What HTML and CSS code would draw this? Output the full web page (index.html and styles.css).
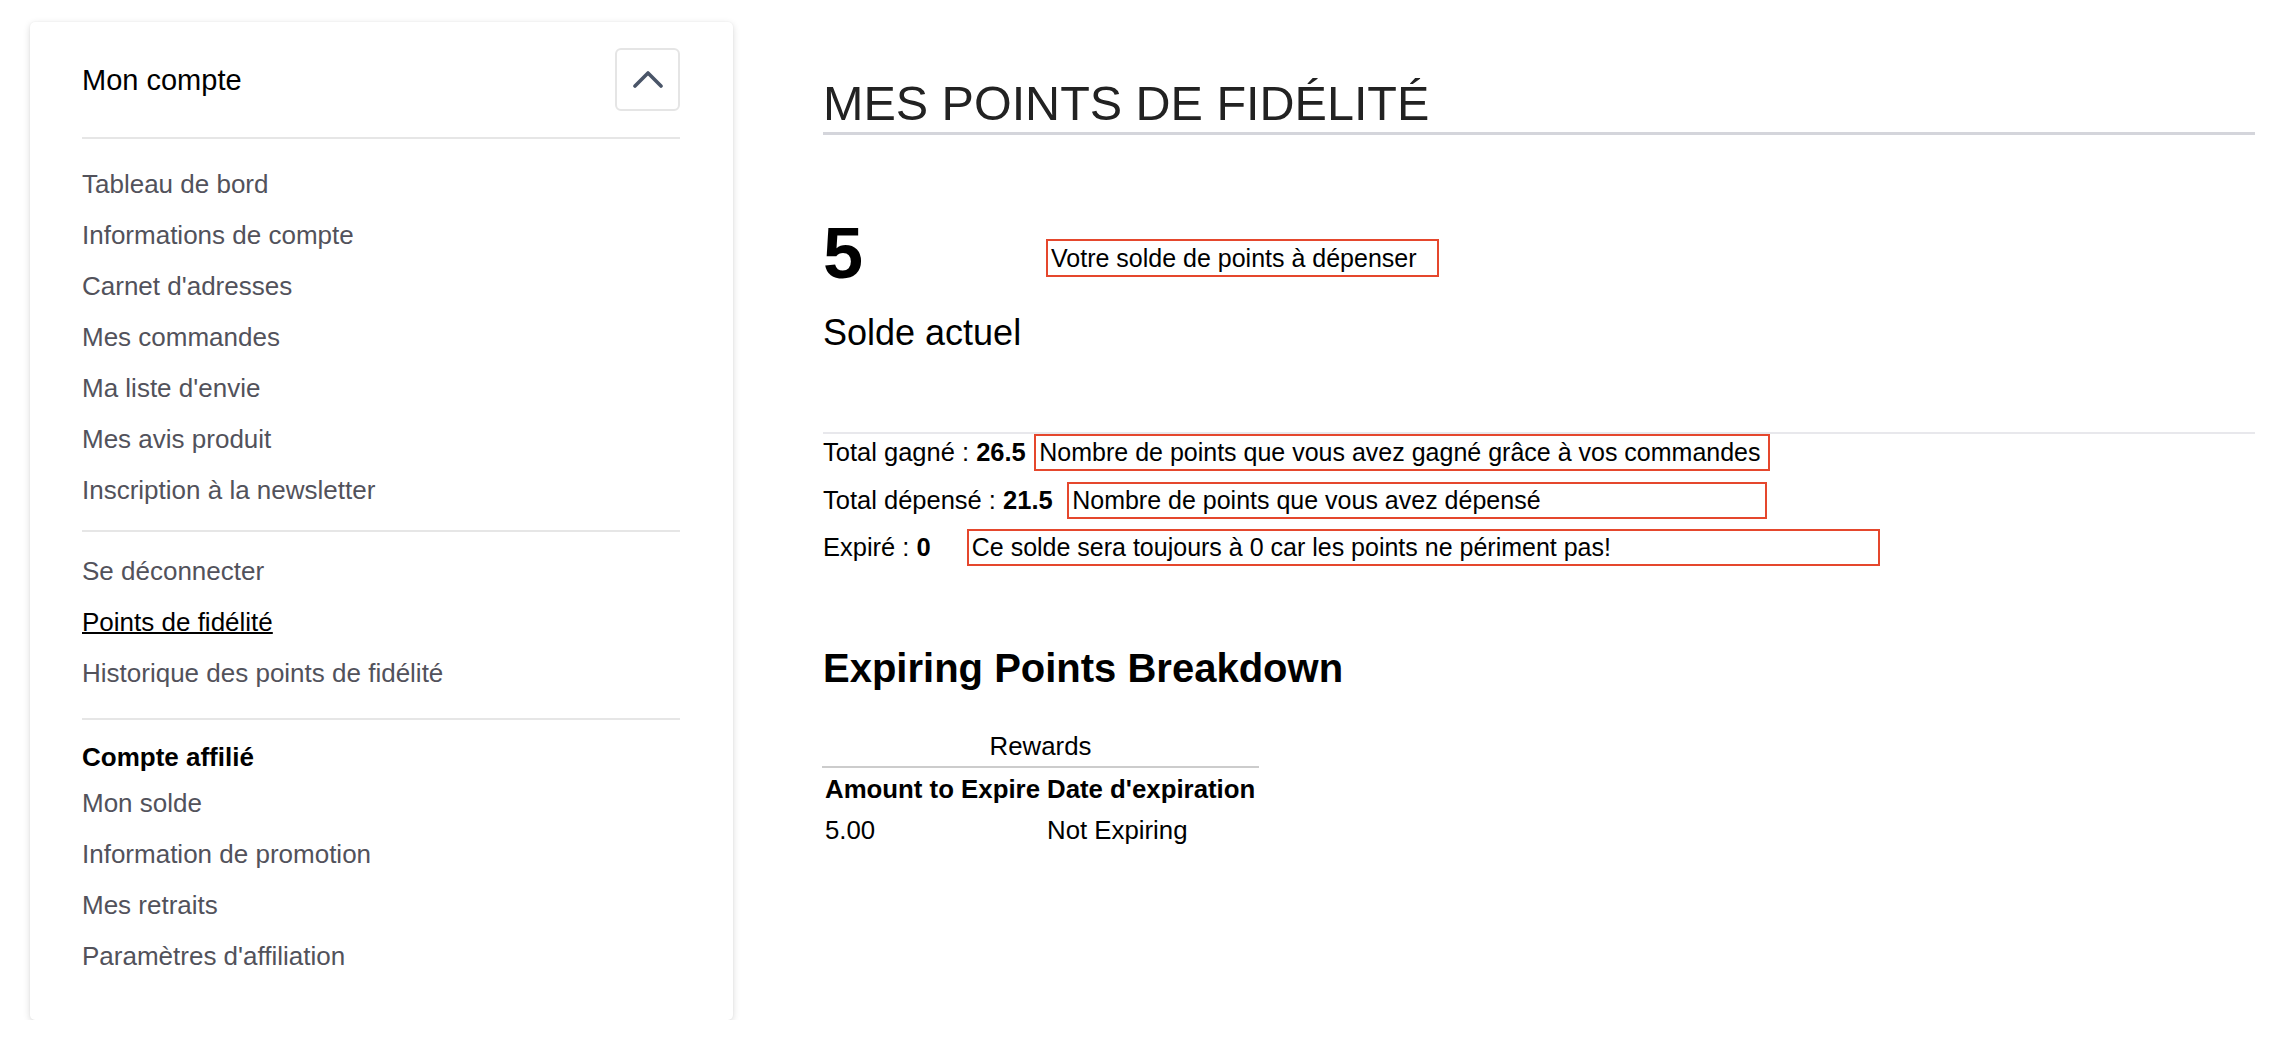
FILE: index.html
```html
<!DOCTYPE html>
<html lang="fr">
<head>
<meta charset="utf-8">
<title>Mes points de fidélité</title>
<link rel="stylesheet" href="styles.css">
</head>
<body>
<div class="page">
  <aside class="sidebar">
    <div class="sidebar-head">
      <span class="sidebar-title">Mon compte</span>
      <button class="toggle" type="button" aria-label="Réduire">
        <svg class="chevron" width="30" height="17" viewBox="0 0 30 17" aria-hidden="true">
          <polyline points="2,15 15,2 28,15" fill="none" stroke="#4a5568" stroke-width="3.6" stroke-linecap="round" stroke-linejoin="round"/>
        </svg>
      </button>
    </div>
    <hr class="divider">
    <ul class="nav nav--main">
      <li><a href="#">Tableau de bord</a></li>
      <li><a href="#">Informations de compte</a></li>
      <li><a href="#">Carnet d'adresses</a></li>
      <li><a href="#">Mes commandes</a></li>
      <li><a href="#">Ma liste d'envie</a></li>
      <li><a href="#">Mes avis produit</a></li>
      <li><a href="#">Inscription à la newsletter</a></li>
    </ul>
    <hr class="divider">
    <ul class="nav nav--account">
      <li><a href="#">Se déconnecter</a></li>
      <li><a href="#" class="active">Points de fidélité</a></li>
      <li><a href="#">Historique des points de fidélité</a></li>
    </ul>
    <hr class="divider">
    <div class="nav-heading">Compte affilié</div>
    <ul class="nav nav--affiliate">
      <li><a href="#">Mon solde</a></li>
      <li><a href="#">Information de promotion</a></li>
      <li><a href="#">Mes retraits</a></li>
      <li><a href="#">Paramètres d'affiliation</a></li>
    </ul>
  </aside>

  <main class="main">
    <h1 class="page-title">MES POINTS DE FIDÉLITÉ</h1>

    <div class="balance">
      <div class="balance-value">5</div>
      <div class="note note--balance">Votre solde de points à dépenser</div>
    </div>
    <div class="balance-label">Solde actuel</div>

    <div class="totals">
      <div class="total-row">
        <span class="total-label">Total gagné : <b>26.5</b></span>
        <span class="note note--earned">Nombre de points que vous avez gagné grâce à vos commandes</span>
      </div>
      <div class="total-row">
        <span class="total-label">Total dépensé : <b>21.5</b></span>
        <span class="note note--spent">Nombre de points que vous avez dépensé</span>
      </div>
      <div class="total-row">
        <span class="total-label">Expiré : <b>0</b></span>
        <span class="note note--expired">Ce solde sera toujours à 0 car les points ne périment pas!</span>
      </div>
    </div>

    <h2 class="section-title">Expiring Points Breakdown</h2>

    <table class="expiry">
      <colgroup>
        <col class="col-amount">
        <col class="col-date">
      </colgroup>
      <thead>
        <tr><th colspan="2" class="expiry-caption">Rewards</th></tr>
        <tr><th>Amount to Expire</th><th>Date d'expiration</th></tr>
      </thead>
      <tbody>
        <tr><td>5.00</td><td>Not Expiring</td></tr>
      </tbody>
    </table>
  </main>
</div>
</body>
</html>
```
FILE: styles.css
```css
* { box-sizing: border-box; }

html, body {
  margin: 0;
  background: #fff;
}

body {
  font-family: "Liberation Sans", Arial, Helvetica, sans-serif;
  color: #000;
}

.page {
  display: flex;
  align-items: flex-start;
  padding: 22px 37px 0 30px;
}

/* ---------- Sidebar ---------- */
.sidebar {
  flex: none;
  width: 703px;
  background: #fff;
  border-radius: 5px;
  box-shadow: 0 2px 7px rgba(0, 0, 0, 0.15), 0 0 2px rgba(0, 0, 0, 0.05);
  padding: 26px 53px 38px 52px;
}

.sidebar-head {
  display: flex;
  align-items: center;
  justify-content: space-between;
  height: 63px;
  margin-bottom: 26px;
}

.sidebar-title {
  font-size: 29px;
  line-height: 40px;
  color: #000;
}

.toggle {
  width: 65px;
  height: 63px;
  padding: 0;
  border: 2px solid #e5e5e5;
  border-radius: 6px;
  background: #fff;
  display: flex;
  align-items: center;
  justify-content: center;
}

.chevron { display: block; }

.divider {
  height: 2px;
  margin: 0;
  border: 0;
  background: #e6e6e6;
}

.nav {
  list-style: none;
  margin: 0;
  padding: 0;
}

.nav--main { padding: 20px 0 14px; }
.nav--account { padding: 14px 0 19px; }

.nav a {
  display: block;
  font-size: 26px;
  line-height: 51px;
  color: #52525b;
  text-decoration: none;
}

.nav a.active {
  color: #000;
  text-decoration: underline;
  text-decoration-thickness: 2px;
}

.nav-heading {
  margin-top: 17px;
  font-size: 26px;
  line-height: 41px;
  font-weight: bold;
  color: #000;
}

/* ---------- Main ---------- */
.main {
  flex: 1;
  min-width: 0;
  margin-left: 90px;
}

.page-title {
  margin: 52px 0 0;
  font-size: 48.5px;
  font-weight: normal;
  line-height: 58px;
  color: #222;
  border-bottom: 3px solid #d4d5db;
}

.balance {
  display: flex;
  align-items: flex-start;
  margin-top: 78px;
}

.balance-value {
  width: 223px;
  flex: none;
  font-size: 72px;
  font-weight: bold;
  line-height: 80px;
}

.note {
  display: block;
  flex: none;
  border: 2px solid #e5472d;
  padding: 0 3px;
  font-size: 25px;
  line-height: 33px;
  color: #000;
  white-space: nowrap;
}

.note--balance {
  width: 393px;
  margin-top: 26px;
  padding: 2px 3px;
  line-height: 30px;
}

.balance-label {
  margin-top: 18px;
  font-size: 36px;
  line-height: 44px;
}

.totals {
  margin-top: 77px;
  border-top: 2px solid #e8e8ec;
}

.total-row {
  display: flex;
  align-items: baseline;
}

.total-row + .total-row { margin-top: 10.5px; }

.total-label {
  flex: none;
  font-size: 25.5px;
  line-height: 33px;
}

.note--earned { margin-left: 8.5px; width: 736px; }
.note--spent { margin-left: 14.5px; width: 700px; }
.note--expired { margin-left: 36px; width: 913px; }

.section-title {
  margin: 78px 0 0;
  font-size: 40px;
  font-weight: bold;
  line-height: 48px;
}

.expiry {
  margin: 37px 0 0 -1px;
  width: 437px;
  table-layout: fixed;
  border-collapse: collapse;
  font-size: 25.8px;
}

.col-amount { width: 222px; }

.expiry th,
.expiry td {
  padding: 3.5px 3px;
  line-height: 34px;
  text-align: left;
  white-space: nowrap;
}

.expiry th { font-weight: bold; }

.expiry th.expiry-caption {
  padding: 0 0 3px;
  font-weight: normal;
  text-align: center;
  border-bottom: 2px solid #cccccc;
}
```
